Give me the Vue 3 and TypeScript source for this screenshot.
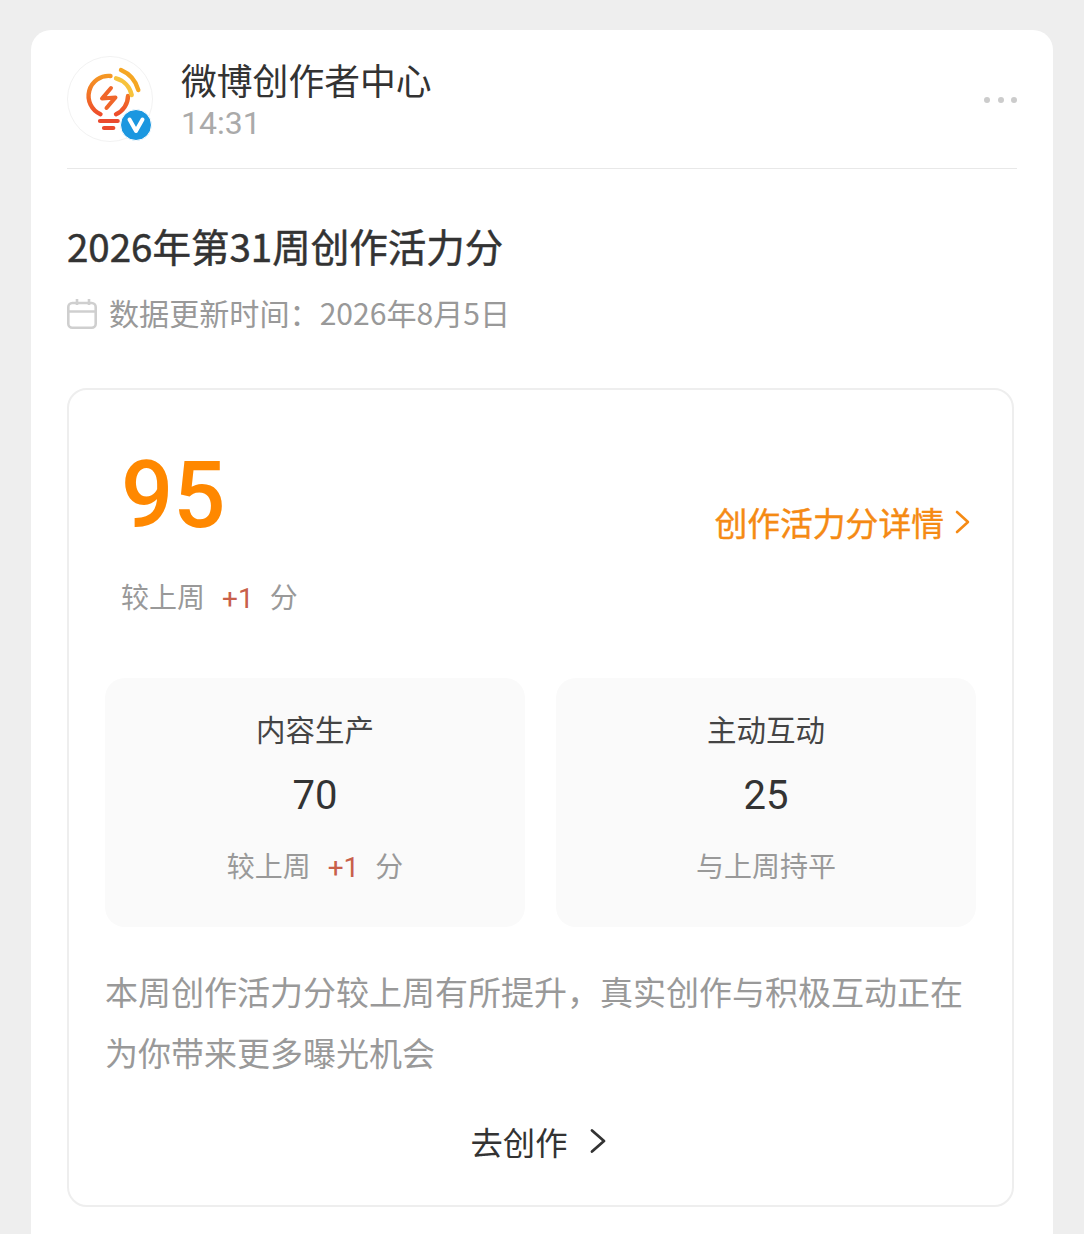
<script setup lang="ts">
interface Stat { title: string; value: number; delta?: number; note?: string }
const stats: Stat[] = [
  { title: '内容生产', value: 70, delta: 1 },
  { title: '主动互动', value: 25, note: '与上周持平' },
]
</script>

<template>
  <div class="page">
    <main class="card">
      <header class="head">
        <div class="avatar">
          <svg width="86" height="86" viewBox="0 0 86 86" fill="none">
            <defs>
              <linearGradient id="ring" gradientUnits="userSpaceOnUse" x1="41" y1="18" x2="41" y2="60">
                <stop offset="0" stop-color="#f59a23" />
                <stop offset="1" stop-color="#ee4a2b" />
              </linearGradient>
            </defs>
            <circle cx="43" cy="43" r="42.5" fill="#fff" stroke="#f2f2f2" />
            <path d="M43.5 20A20 20 0 0 0 33.5 58.2M61 40A20 20 0 0 1 49 58.2" stroke="url(#ring)" stroke-width="4.4" stroke-linecap="round" />
            <path d="M44 32L35 42.6L48.5 41.4L39.5 52" stroke="#f0662a" stroke-width="4" stroke-linecap="round" stroke-linejoin="round" />
            <path d="M33 65H50.7M37 72H46.3" stroke="#ea4a2e" stroke-width="4.2" stroke-linecap="round" />
            <path d="M49 22.3A22 22 0 0 1 64.7 39" stroke="#f7c33c" stroke-width="4.4" stroke-linecap="round" />
            <path d="M54 14A30 30 0 0 1 71.3 34" stroke="#f5a623" stroke-width="4.4" stroke-linecap="round" />
            <circle cx="69" cy="69" r="15.5" fill="#1b97e0" stroke="#fff" stroke-width="1" />
            <path d="M62.5 63.5L69 75L75.5 63.5" stroke="#fff" stroke-width="4" stroke-linejoin="round" stroke-linecap="round" />
          </svg>
        </div>
        <div class="who">
          <div class="name">微博创作者中心</div>
          <div class="time">14:31</div>
        </div>
        <div class="more"><i></i><i></i><i></i></div>
      </header>

      <h1 class="title">2026年第31周创作活力分</h1>
      <div class="date">
        <svg width="30" height="30" viewBox="0 0 30 30" fill="none" stroke="#cfcfcf" stroke-width="2.6">
          <rect x="1.3" y="4" width="27.4" height="24.7" rx="4" />
          <path d="M1 12.5H29M10 0V6M22 0V6" />
        </svg>
        <span>数据更新时间&#xFF1A;2026年8月5日</span>
      </div>

      <section class="box">
        <div class="score-row">
          <div class="score-left">
            <div class="score">95</div>
            <div class="delta">较上周<b>+1</b>分</div>
          </div>
          <a class="detail">创作活力分详情
            <svg width="16" height="26" viewBox="0 0 16 26" fill="none" stroke="#f58a14" stroke-width="2.6" stroke-linecap="round" stroke-linejoin="round"><path d="M3 3L14 13L3 23" /></svg>
          </a>
        </div>

        <div class="stats">
          <div v-for="s in stats" :key="s.title" class="stat">
            <div class="stat-title">{{ s.title }}</div>
            <div class="stat-value">{{ s.value }}</div>
            <div class="stat-note">
              <template v-if="s.delta">较上周<b>+{{ s.delta }}</b>分</template>
              <template v-else>{{ s.note }}</template>
            </div>
          </div>
        </div>

        <p class="desc">本周创作活力分较上周有所提升&#xFF0C;真实创作与积极互动正在为你带来更多曝光机会</p>

        <div class="go">去创作
          <svg width="16" height="26" viewBox="0 0 16 26" fill="none" stroke="#333" stroke-width="2.8" stroke-linecap="round" stroke-linejoin="round"><path d="M2 2.5L14 13L2 23.5" /></svg>
        </div>
      </section>
    </main>
  </div>
</template>

<style>
html, body { margin: 0; background: #eeeeee; }
</style>

<style scoped>
.page {
  height: 1234px;
  overflow: hidden;
  padding: 30px 31px 0;
  box-sizing: border-box;
  font-family: "Noto Sans CJK SC", "Noto Sans", sans-serif;
  background: #eeeeee;
}
.card {
  background: #fff;
  border-radius: 20px;
  padding: 26px 36px 60px;
}
.head {
  display: flex;
  align-items: center;
  gap: 28px;
  padding-bottom: 26px;
  border-bottom: 1px solid #e8e8e8;
}
.avatar { width: 86px; height: 86px; flex: none; }
.avatar svg { display: block; }
.who { flex: 1; }
.name { font-size: 35.8px; line-height: 46px; margin-bottom: 2px; color: #333; }
.time { font-size: 32px; line-height: 38px; color: #aaa; font-family: Roboto, sans-serif; }
.more { display: flex; gap: 7.5px; margin: 2px 0 0 0; }
.more i { width: 6px; height: 6px; border-radius: 50%; background: #ccc; }
.title {
  margin: 48px 0 0;
  font-size: 38.5px;
  line-height: 56px;
  font-weight: 400;
  -webkit-text-stroke: 0.5px #333;
  color: #333;
}
.date {
  margin-top: 16px;
  display: flex;
  align-items: center;
  gap: 12px;
  height: 46px;
  font-size: 30.1px;
  color: #999;
}
.date svg { flex: none; margin-top: 4px; }
.box {
  margin-top: 53px;
  width: 947px;
  box-sizing: border-box;
  border: 2px solid #eee;
  border-radius: 20px;
  padding: 52px 36px 40px;
}
.score-row { display: flex; align-items: center; justify-content: space-between; padding: 0 6px 0 16px; }
.score {
  font-family: Roboto, sans-serif;
  font-size: 92px;
  font-weight: 500;
  line-height: 108px;
  color: #ff8800;
}
.delta { margin-top: 26px; font-size: 28px; line-height: 40px; color: #999; }
.delta b, .stat-note b { font-weight: 400; color: #c8604a; margin: 0 16px 0 17px; font-family: Roboto, sans-serif; }
.detail {
  display: flex;
  align-items: center;
  gap: 10px;
  margin-top: -18px;
  font-size: 32.8px;
  color: #f58a14;
  -webkit-text-stroke: 0.4px #f58a14;
}
.stats { margin-top: 59px; display: grid; grid-template-columns: 420px 420px; gap: 31px; }
.stat {
  height: 249px;
  background: #fafafa;
  border-radius: 20px;
  text-align: center;
  padding-top: 28px;
  box-sizing: border-box;
}
.stat-title { font-size: 29.5px; line-height: 44px; color: #444; }
.stat-value { margin-top: 23px; font-size: 40px; line-height: 46px; color: #333; font-family: Roboto, sans-serif; }
.stat-note { margin-top: 26px; font-size: 28px; line-height: 40px; color: #999; }
.desc { margin: 34px 0 0; font-size: 33px; line-height: 61px; color: #999; }
.go {
  margin-top: 34px;
  padding-right: 4px;
  display: flex;
  align-items: center;
  justify-content: center;
  gap: 23px;
  font-size: 32.3px;
  line-height: 48px;
  color: #333;
}
</style>
